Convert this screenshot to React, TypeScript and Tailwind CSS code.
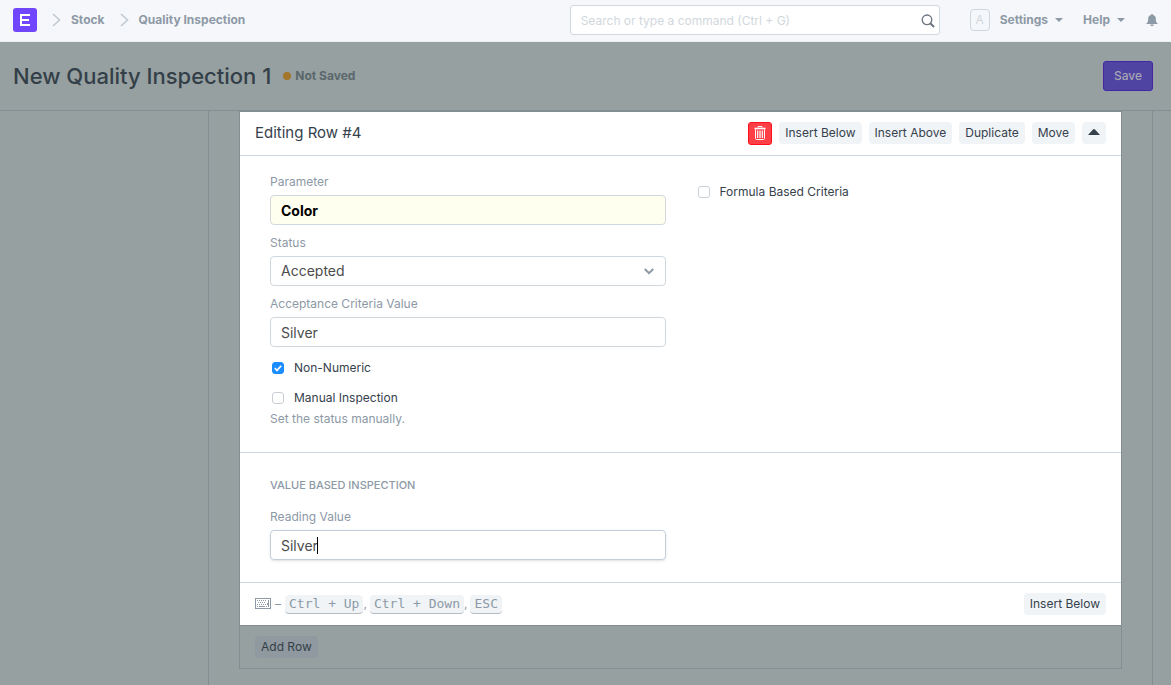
import { useState } from "react";
import type { ReactNode } from "react";

const INPUT =
  "block h-[30px] w-full rounded border border-[#d1d8dd] px-[10px] text-sm outline-none";

function Chevron() {
  return (
    <svg width="9" height="14" viewBox="0 0 9 14" fill="none" aria-hidden="true">
      <path d="M1 1l6.5 6L1 13" stroke="#c0cad4" strokeWidth="1.6" />
    </svg>
  );
}

function Caret() {
  return (
    <svg width="8" height="4" viewBox="0 0 8 4" aria-hidden="true">
      <path d="M0 0h8L4 4z" fill="currentColor" />
    </svg>
  );
}

function TrashIcon() {
  return (
    <svg width="12" height="14" viewBox="0 0 12 14" fill="none" stroke="#fff" aria-hidden="true">
      <path d="M4 1.5V.5h4v1" />
      <path d="M.5 2.5h11" strokeWidth="1.6" />
      <path d="M1.5 3.5v8.9c0 .6.5 1.1 1.1 1.1h6.8c.6 0 1.1-.5 1.1-1.1V3.5" />
      <path d="M3.5 4.5v7.5M5.2 4.5v7.5M6.8 4.5v7.5M8.5 4.5v7.5" strokeWidth=".9" />
    </svg>
  );
}

function KeyboardIcon() {
  return (
    <svg width="16" height="12" viewBox="0 0 16 12" fill="none" stroke="#8d99a6" aria-hidden="true">
      <rect x=".5" y=".5" width="15" height="10" />
      <path d="M2 2.5h10M3 4.5h8M2 6.5h10" strokeDasharray="1 1" />
      <path d="M2 8.5h1M4 8.5h6M11 8.5h1" />
      <path d="M13 2h1v7h-1V7h-1V5h1z" fill="#8d99a6" stroke="none" />
    </svg>
  );
}

function GridButton({ children, label }: { children: ReactNode; label?: string }) {
  return (
    <button
      type="button"
      aria-label={label}
      className="flex h-[22px] items-center rounded bg-[#f0f4f7] px-[6px] text-xs text-[#36414c]"
    >
      {children}
    </button>
  );
}

function Field({ id, label, children }: { id: string; label: string; children: ReactNode }) {
  return (
    <div>
      <label htmlFor={id} className="mb-[3px] block text-xs leading-5 text-[#8d99a6]">
        {label}
      </label>
      {children}
    </div>
  );
}

function Check({ label, defaultChecked = false }: { label: string; defaultChecked?: boolean }) {
  const [checked, setChecked] = useState(defaultChecked);

  return (
    <label className="flex h-5 items-center gap-[10px] pl-[2px] text-xs text-[#36414c]">
      <span className="relative flex">
        <input
          type="checkbox"
          checked={checked}
          onChange={(e) => setChecked(e.target.checked)}
          className="size-3 appearance-none rounded-[3px] border border-[#c8d0d6] bg-white checked:border-[#1b8dff] checked:bg-[#1b8dff]"
        />
        {checked && (
          <svg
            className="pointer-events-none absolute inset-0"
            width="12"
            height="12"
            viewBox="0 0 12 12"
            fill="none"
            aria-hidden="true"
          >
            <path d="M2.8 6.2l2.2 2.2 4.2-4.6" stroke="#fff" strokeWidth="1.7" />
          </svg>
        )}
      </span>
      {label}
    </label>
  );
}

function Key({ children }: { children: ReactNode }) {
  return (
    <kbd className="rounded border-b border-[#b4bcc4] bg-[#f0f4f7] px-1 font-['DejaVu_Sans_Mono',monospace] text-[13px] leading-[18px]">
      {children}
    </kbd>
  );
}

function Navbar() {
  return (
    <header className="flex h-[42px] items-center border-b border-[#ebeef2] bg-[#f5f7fa] pr-[12px] pb-px pl-[13px] text-xs font-bold text-[#8d99a6]">
      <nav className="flex flex-1 items-center">
        <a href="#home" aria-label="Home">
          <svg width="24" height="24" viewBox="0 0 24 24" aria-hidden="true">
            <rect width="24" height="24" rx="3" fill="#7047ff" />
            <path d="M7 7h10M8 12h8M7 17h10M8 6v12" stroke="#fff" strokeWidth="2" fill="none" />
          </svg>
        </a>
        <span className="ml-[15px] flex">
          <Chevron />
        </span>
        <a href="#stock" className="ml-[10px]">Stock</a>
        <span className="ml-[15px] flex">
          <Chevron />
        </span>
        <a href="#quality" className="ml-[10px]">Quality Inspection</a>
      </nav>
      <div className="relative w-[370px]">
        <input
          type="text"
          aria-label="Search"
          placeholder="Search or type a command (Ctrl + G)"
          className="block h-[30px] w-full rounded-[3px] border border-[#d1d8dd] bg-white px-[10px] text-xs font-normal outline-none placeholder:text-[#d1d8dd]"
        />
        <svg
          className="absolute top-[9px] right-[5px]"
          width="14"
          height="14"
          viewBox="0 0 14 14"
          fill="none"
          stroke="#6c7680"
          aria-hidden="true"
        >
          <circle cx="6" cy="5.8" r="4.8" strokeWidth="1.3" />
          <path d="M9.3 9.3l3.7 3.7" strokeWidth="2" />
        </svg>
      </div>
      <span className="ml-[30px] flex h-[22px] w-5 items-center justify-center rounded border border-[#d1d8dd] font-normal text-[#d1d8dd]">
        A
      </span>
      <button type="button" className="ml-[10px] flex items-center gap-[7px]">
        Settings <Caret />
      </button>
      <button type="button" className="ml-5 flex items-center gap-[7px]">
        Help <Caret />
      </button>
      <button type="button" aria-label="Notifications" className="ml-5">
        <svg width="14" height="13" viewBox="0 0 13 13" fill="#8d99a6" aria-hidden="true">
          <path d="M6.5 0c.6 0 1 .4 1 .9 1.900.4 2.800 1.900 2.800 3.700 0 3 .6 4.200 2.200 5.400H.5c1.600-1.200 2.200-2.400 2.200-5.400 0-1.800.9-3.300 2.800-3.700 0-.5.4-.9 1-.9z" />
          <path d="M4.8 10.6h3.4c0 1-.7 1.7-1.7 1.7s-1.7-.7-1.7-1.7z" />
        </svg>
      </button>
    </header>
  );
}

function RowForm() {
  return (
    <form className="bg-white">
      <div className="flex h-[44px] items-center justify-between border-b border-[#d1d8dd] px-[15px] pb-px">
        <h2 className="text-[15px] text-[#36414c]">Editing Row #4</h2>
        <div className="flex items-start gap-[7px]">
          <button
            type="button"
            aria-label="Delete"
            className="flex h-[23px] w-6 items-center justify-center rounded-[3px] border border-[#ff0f1b] bg-[#ff3e45]"
          >
            <TrashIcon />
          </button>
          <GridButton>Insert Below</GridButton>
          <GridButton>Insert Above</GridButton>
          <GridButton>Duplicate</GridButton>
          <GridButton>Move</GridButton>
          <GridButton label="Collapse">
            <svg width="12" height="8" viewBox="0 0 12 8" aria-hidden="true">
              <path d="M0 6L5 .5Q6-.3 7 .5L12 6z" fill="#36414c" />
            </svg>
          </GridButton>
        </div>
      </div>

      <section className="grid grid-cols-2 border-b border-[#d1d8dd] px-[15px] pt-4 pb-[23px]">
        <div className="flex flex-col gap-2 px-[15px]">
          <Field id="parameter" label="Parameter">
            <input
              id="parameter"
              defaultValue="Color"
              className={`${INPUT} bg-[#fffff0] font-bold text-black`}
            />
          </Field>
          <Field id="status" label="Status">
            <div className="relative">
              <select
                id="status"
                defaultValue="Accepted"
                className={`${INPUT} appearance-none bg-white text-[#4c4c4c]`}
              >
                <option>Accepted</option>
                <option>Rejected</option>
              </select>
              <svg
                className="pointer-events-none absolute top-3 right-3"
                width="10"
                height="7"
                viewBox="0 0 10 7"
                fill="none"
                aria-hidden="true"
              >
                <path d="M.8 1L5 5.2 9.2 1" stroke="#8d99a6" strokeWidth="2" />
              </svg>
            </div>
          </Field>
          <Field id="acceptance" label="Acceptance Criteria Value">
            <input id="acceptance" defaultValue="Silver" className={`${INPUT} text-[#4c4c4c]`} />
          </Field>
          <div className="flex flex-col gap-[10px] pt-[3px]">
            <Check label="Non-Numeric" defaultChecked />
            <div>
              <Check label="Manual Inspection" />
              <p className="text-xs leading-[21px] text-[#8d99a6]">Set the status manually.</p>
            </div>
          </div>
        </div>
        <div className="px-[15px] pt-[10px]">
          <Check label="Formula Based Criteria" />
        </div>
      </section>

      <section className="border-b border-[#d1d8dd] px-[15px] pt-[22px] pb-[22px]">
        <h3 className="px-[15px] text-[11px] leading-5 font-medium text-[#8d99a6] uppercase">
          Value Based Inspection
        </h3>
        <div className="mt-3 w-1/2 px-[15px]">
          <Field id="reading" label="Reading Value">
            <div className="relative">
              <input
                id="reading"
                autoFocus
                defaultValue="Silver"
                className={`${INPUT} text-[#4c4c4c] caret-transparent focus:border-[#c3cfdb] focus:shadow-sm`}
              />
              <span className="pointer-events-none absolute top-[7px] left-[47px] h-[17px] w-px bg-black" />
            </div>
          </Field>
        </div>
      </section>

      <div className="flex h-[42px] items-center justify-between px-[15px]">
        <div className="flex items-center text-xs text-[#8d99a6]">
          <KeyboardIcon />
          <span className="mx-1">–</span>
          <Key>Ctrl + Up</Key>
          <span className="mr-[3px]">,</span>
          <Key>Ctrl + Down</Key>
          <span className="mr-[3px]">,</span>
          <Key>ESC</Key>
        </div>
        <GridButton>Insert Below</GridButton>
      </div>
    </form>
  );
}

export default function App() {
  return (
    <div className="flex min-h-screen flex-col bg-[#97a0a0] font-['Inter',sans-serif]">
      <Navbar />
      <div className="flex h-[69px] items-center border-b border-[#818e92] pr-[18px] pl-[13px]">
        <h1 className="text-[22px] font-medium text-[#333f48]">New Quality Inspection 1</h1>
        <span className="ml-3 size-2 rounded-full bg-[#a2752a]" />
        <span className="ml-1 text-xs font-bold text-[#5a676c]">Not Saved</span>
        <button
          type="button"
          className="ml-auto h-[30px] rounded-[3px] border border-[#4326a5] bg-[#5044a2] px-[10px] text-xs font-medium text-[#a6a6b4]"
        >
          Save
        </button>
      </div>

      <div className="flex flex-1">
        <aside className="w-[208px]" />
        <main className="mr-[18px] flex-1 border-x border-[#818e92] px-[30px] pb-4">
          <div className="border border-[#818e92]">
            <RowForm />
            <div className="flex h-[43px] items-center border-t border-[#818e92] px-[15px]">
              <button
                type="button"
                className="h-[22px] rounded bg-[#8f999f] px-[6px] text-xs text-[#333f48]"
              >
                Add Row
              </button>
            </div>
          </div>
        </main>
      </div>
    </div>
  );
}
